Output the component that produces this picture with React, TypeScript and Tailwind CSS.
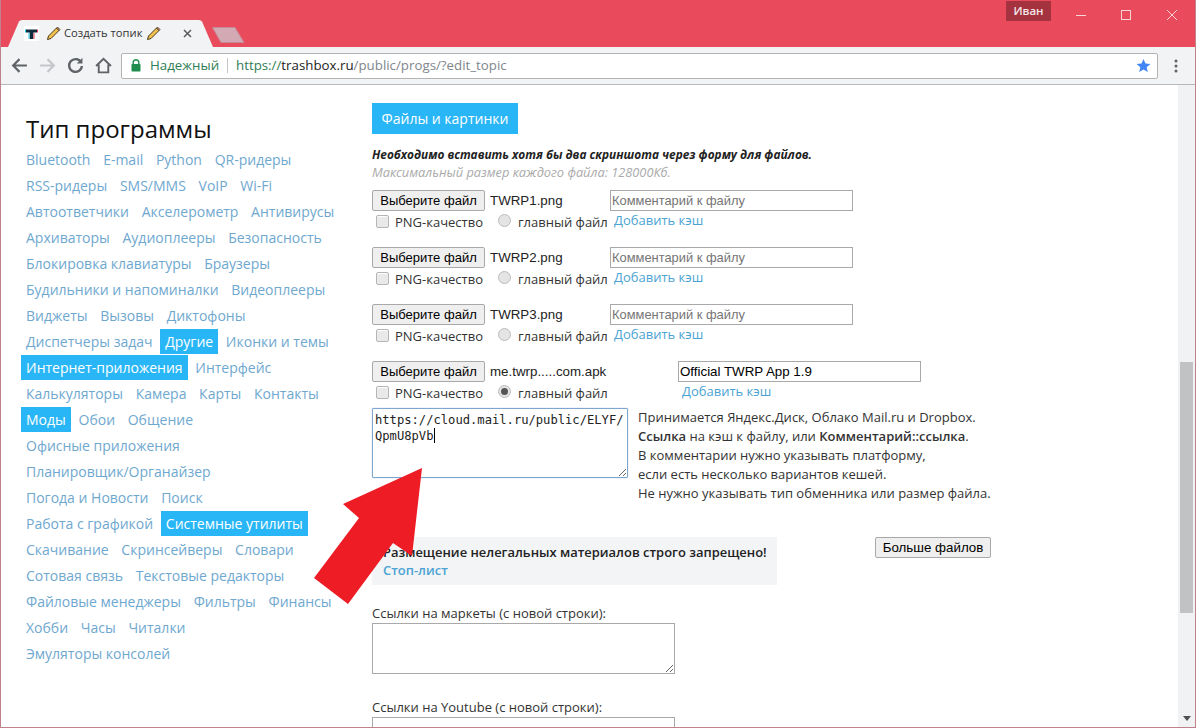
import React from "react";

const rows: [string, boolean?][][] = [
  [["Bluetooth"], ["E-mail"], ["Python"], ["QR-ридеры"]],
  [["RSS-ридеры"], ["SMS/MMS"], ["VoIP"], ["Wi-Fi"]],
  [["Автоответчики"], ["Акселерометр"], ["Антивирусы"]],
  [["Архиваторы"], ["Аудиоплееры"], ["Безопасность"]],
  [["Блокировка клавиатуры"], ["Браузеры"]],
  [["Будильники и напоминалки"], ["Видеоплееры"]],
  [["Виджеты"], ["Вызовы"], ["Диктофоны"]],
  [["Диспетчеры задач"], ["Другие", true], ["Иконки и темы"]],
  [["Интернет-приложения", true], ["Интерфейс"]],
  [["Калькуляторы"], ["Камера"], ["Карты"], ["Контакты"]],
  [["Моды", true], ["Обои"], ["Общение"]],
  [["Офисные приложения"]],
  [["Планировщик/Органайзер"]],
  [["Погода и Новости"], ["Поиск"]],
  [["Работа с графикой"], ["Системные утилиты", true]],
  [["Скачивание"], ["Скринсейверы"], ["Словари"]],
  [["Сотовая связь"], ["Текстовые редакторы"]],
  [["Файловые менеджеры"], ["Фильтры"], ["Финансы"]],
  [["Хобби"], ["Часы"], ["Читалки"]],
  [["Эмуляторы консолей"]],
];

function Pencil() {
  return (
    <svg width="15" height="15" viewBox="0 0 15 15" className="shrink-0">
      <path d="M1.5 13.5 L2.5 10 L10.5 2 L13 4.5 L5 12.5 Z" fill="#f2c14e" stroke="#4a3a1a" strokeWidth="1" strokeLinejoin="round" />
      <path d="M10.5 2 L11.5 1 L14 3.5 L13 4.5 Z" fill="#c98a7a" stroke="#4a3a1a" strokeWidth="0.8" />
    </svg>
  );
}

function Check() {
  return <input type="checkbox" readOnly className="appearance-none w-[13px] h-[13px] rounded-[2px] border border-[#b5b5b5] bg-[#e9e9e9] shadow-[inset_0_1px_1px_#ffffff]" />;
}

function Radio({ on }: { on?: boolean }) {
  return (
    <span className="flex items-center justify-center w-[13px] h-[13px] rounded-full border border-[#bbbbbb] bg-[#e4e4e4]">
      {on && <span className="w-[7px] h-[7px] rounded-full bg-[#555555]" />}
    </span>
  );
}

function FileRow({ name, comment, last }: { name: string; comment?: string; last?: boolean }) {
  return (
    <div className={last ? "h-[47px]" : "h-[57px]"}>
      <div className="flex h-[21px] items-center font-['Liberation_Sans',sans-serif] text-[13.33px] text-[#222222]">
        <button className="w-[113px] h-[21px] border border-[#a9a9a9] rounded-[2px] bg-[#efefef] text-[13px] text-black">Выберите файл</button>
        <span className={`ml-[5px] ${last ? "w-[188px]" : "w-[120px]"}`}>{name}</span>
        <input
          readOnly
          placeholder="Комментарий к файлу"
          defaultValue={comment}
          className="w-[243px] h-[21px] border border-[#a9a9a9] px-[1px] text-[13.33px] text-black placeholder:text-[#757575] placeholder:text-[12.9px] outline-none bg-white"
        />
      </div>
      <div className="flex h-[24px] items-center text-[13px] text-[#333333]">
        <span className="ml-[4px] flex -mt-[1px] -translate-y-[1px]"><Check /></span>
        <span className="ml-[6px] w-[103px]">PNG-качество</span>
        <span className="flex -mt-[5px]"><Radio on={last} /></span>
        <span className="ml-[7px] w-[96px]">главный файл</span>
        {!last && <a className="text-[#4ba3d3] -mt-[4px]">Добавить кэш</a>}
      </div>
    </div>
  );
}

export default function App() {
  return (
    <div className="relative w-[1196px] h-[728px] overflow-hidden flex flex-col bg-white border-x border-b border-[#c0808c] font-['Open_Sans',sans-serif]">
      {/* Title bar */}
      <div className="relative h-[47px] shrink-0 bg-[#e94b5c] flex items-start">
        <div className="relative mt-[20px] ml-[7px] w-[205px] h-[27px] flex items-center">
          <svg className="absolute inset-0" width="205" height="27" viewBox="0 0 205 27">
            <path d="M0 27 L11 1.5 Q12 0 14 0 L191 0 Q193 0 194 1.5 L205 27 Z" fill="#f2f3f5" />
          </svg>
          <div className="relative flex items-center w-full">
            <svg className="ml-[16px]" width="15" height="15" viewBox="0 0 15 15">
              <rect width="15" height="15" fill="#ffffff" />
              <path d="M2 3.5 H13 V6.5 H9.3 V13 H5.7 V6.5 H2 Z" fill="#0f2a38" />
              <path d="M1.5 3.5 V6.5 M5 7 V13" stroke="#25c4e8" strokeWidth="1" />
              <path d="M13.5 3.5 V6.5 M10 7 V13" stroke="#e8405a" strokeWidth="1" />
            </svg>
            <span className="ml-[7px]"><Pencil /></span>
            <span className="ml-[3px] w-[79px] text-[11.2px] text-[#333333] whitespace-nowrap">Создать топик</span>
            <span className="ml-[3px]"><Pencil /></span>
            <svg className="ml-[22px]" width="9" height="9" viewBox="0 0 9 9">
              <path d="M1 1 L8 8 M8 1 L1 8" stroke="#5a5a5a" strokeWidth="1.5" />
            </svg>
          </div>
        </div>
        <svg className="mt-[27px] -ml-[1px]" width="33" height="16" viewBox="0 0 33 16">
          <path d="M0.5 0.5 H23 L32 15.5 H9 Z" fill="#d3aab4" stroke="#c48a96" />
        </svg>
        <div className="absolute left-[1005px] top-[1px] w-[45px] h-[20px] bg-[#a5323f] flex items-center justify-center text-[11.5px] font-semibold text-[#f3e6e8]">Иван</div>
        <svg className="absolute left-[1070px] top-[8px]" width="115" height="14" viewBox="0 0 115 14">
          <path d="M5 7.5 H15" stroke="#f6d5d9" strokeWidth="1" />
          <rect x="50.5" y="2.5" width="9" height="9" fill="none" stroke="#f6d5d9" />
          <path d="M96 2 L106 12 M106 2 L96 12" stroke="#f6d5d9" strokeWidth="1" />
        </svg>
      </div>

      {/* Toolbar */}
      <div className="h-[38px] shrink-0 bg-[#f2f3f5] border-b border-[#b8b8b8] flex items-center">
        <svg className="ml-[10px]" width="17" height="17" viewBox="0 0 16 16">
          <path d="M15 8 H2.5 M8 2 L2 8 L8 14" fill="none" stroke="#5f6368" strokeWidth="2" />
        </svg>
        <svg className="ml-[11px]" width="17" height="17" viewBox="0 0 16 16">
          <path d="M1 8 H13.5 M8 2 L14 8 L8 14" fill="none" stroke="#c4c6c9" strokeWidth="2" />
        </svg>
        <svg className="ml-[11px]" width="17" height="17" viewBox="0 0 16 16">
          <path d="M13.2 5 A6 6 0 1 0 14 8.5" fill="none" stroke="#5f6368" strokeWidth="2.2" />
          <path d="M14.5 0.8 V6.2 H9.2 Z" fill="#5f6368" />
        </svg>
        <svg className="ml-[11px]" width="17" height="17" viewBox="0 0 16 16">
          <path d="M1 8.5 L8 1.7 L15 8.5 M3.5 7 V14.5 H12.5 V7" fill="none" stroke="#5f6368" strokeWidth="1.8" />
        </svg>
        <div className="ml-[9px] w-[1037px] h-[26px] bg-white border border-[#b3b3b3] rounded-[2px] flex items-center">
          <svg className="ml-[9px]" width="10" height="13" viewBox="0 0 10 13">
            <path d="M2.2 5.5 V3.6 A2.8 2.8 0 0 1 7.8 3.6 V5.5" fill="none" stroke="#1e8e4e" strokeWidth="1.4" />
            <rect x="0.5" y="5" width="9" height="7.5" rx="0.8" fill="#1e8e4e" />
          </svg>
          <span className="ml-[9px] text-[13.3px] text-[#2f7d55] w-[69px] whitespace-nowrap">Надежный</span>
          <span className="ml-[8px] w-px h-[15px] bg-[#c4c4c4]" />
          <span className="ml-[8px] text-[13.3px] whitespace-nowrap">
            <span className="text-[#2f7d55]">https://</span>
            <span className="text-[#222222]">trashbox.ru</span>
            <span className="text-[#80868b]">/public/progs/?edit_topic</span>
          </span>
          <svg className="ml-auto mr-[6px]" width="15" height="15" viewBox="0 0 24 24">
            <path d="M12 1.5 L15.2 8.6 L23 9.4 L17.1 14.6 L18.8 22.3 L12 18.3 L5.2 22.3 L6.9 14.6 L1 9.4 L8.8 8.6 Z" fill="#4285f4" />
          </svg>
        </div>
        <svg className="ml-[16px]" width="4" height="14" viewBox="0 0 4 14">
          <circle cx="2" cy="2" r="1.5" fill="#5f6368" />
          <circle cx="2" cy="7" r="1.5" fill="#5f6368" />
          <circle cx="2" cy="12" r="1.5" fill="#5f6368" />
        </svg>
      </div>

      {/* Page */}
      <div className="flex-1 min-h-0 flex overflow-hidden">
        <div className="flex-1 min-w-0 flex">
          <aside className="w-[351px] shrink-0 box-content pl-[20px] pt-[28px]">
            <h2 className="pl-[5px] text-[24px] leading-[32px] text-[#111111] whitespace-nowrap">Тип программы</h2>
            <div className="mt-[1px] text-[14px]">
              {rows.map((row, i) => (
                <div key={i} className="flex h-[26px] items-center gap-[2.7px] whitespace-nowrap">
                  {row.map(([t, on]) => (
                    <span
                      key={t}
                      className={`px-[5px] h-[25px] leading-[25px] ${on ? "bg-[#29b6f6] text-white font-medium" : "text-[#6fa8cf]"}`}
                    >
                      {t}
                    </span>
                  ))}
                </div>
              ))}
            </div>
          </aside>

          <main className="flex-1 min-w-0 pt-[18px]">
            <div className="w-[146px] h-[31px] bg-[#29b6f6] text-white text-[14px] font-medium flex items-center justify-center whitespace-nowrap">Файлы и картинки</div>
            <div className="mt-[11px] leading-[18px] italic whitespace-nowrap">
              <div className="text-[11.85px] font-bold text-[#222222]">Необходимо вставить хотя бы два скриншота через форму для файлов.</div>
              <div className="text-[12.8px] text-[#aaaaaa]">Максимальный размер каждого файла: 128000Кб.</div>
            </div>
            <div className="mt-[9px]">
              <FileRow name="TWRP1.png" />
              <FileRow name="TWRP2.png" />
              <FileRow name="TWRP3.png" />
              <div className="relative">
                <FileRow name="me.twrp.....com.apk" comment="Official TWRP App 1.9" last />
                <a className="absolute left-[310px] top-[21px] text-[13px] leading-[18px] text-[#4ba3d3]">Добавить кэш</a>
              </div>
            </div>

            <div className="flex h-[70px] items-start">
              <div className="relative w-[256px] h-[70px] shrink-0">
                <textarea
                  readOnly
                  defaultValue={"https://cloud.mail.ru/public/ELYF/\nQpmU8pVb"}
                  className="block w-[256px] h-[70px] border border-[#7fa6cc] rounded-[1px] shadow-[0_0_1px_#6a9bd0] pl-[2px] pt-[3px] font-['DejaVu_Sans_Mono',monospace] text-[12.15px] leading-[16px] text-[#222222] outline-none overflow-hidden resize"
                />
                <span className="absolute left-[62px] top-[20px] w-px h-[15px] bg-black" />
              </div>
              <div className="ml-[10px] text-[13px] leading-[19px] text-[#333333] whitespace-nowrap">
                <div>Принимается Яндекс.Диск, Облако Mail.ru и Dropbox.</div>
                <div>
                  <b className="font-semibold">Ссылка</b> на кэш к файлу, или <b className="font-semibold">Комментарий::ссылка</b>.
                </div>
                <div>В комментарии нужно указывать платформу,</div>
                <div>если есть несколько вариантов кешей.</div>
                <div>Не нужно указывать тип обменника или размер файла.</div>
              </div>
            </div>

            <div className="mt-[59px] flex items-start">
              <div className="w-[405px] h-[48px] bg-[#f2f4f6] pl-[11px] pt-[6px] text-[12.95px] leading-[18px] font-semibold whitespace-nowrap">
                <div className="text-[#222222]">Размещение нелегальных материалов строго запрещено!</div>
                <a className="text-[#4ba3d3]">Стоп-лист</a>
              </div>
              <button className="ml-[98px] w-[116px] h-[21px] border border-[#a9a9a9] rounded-[2px] bg-[#efefef] font-['Liberation_Sans',sans-serif] text-[13.33px] text-black">Больше файлов</button>
            </div>

            <div className="mt-[19px] text-[13px] leading-[18px] text-[#333333]">Ссылки на маркеты (с новой строки):</div>
            <textarea readOnly className="block mt-[1px] w-[303px] h-[51px] border border-[#a9a9a9] outline-none resize" />
            <div className="mt-[24px] text-[13px] leading-[18px] text-[#333333]">Ссылки на Youtube (с новой строки):</div>
            <textarea readOnly className="block mt-[1px] w-[303px] h-[51px] border border-[#a9a9a9] outline-none resize" />
          </main>
        </div>

        {/* Scrollbar */}
        <div className="relative w-[17px] shrink-0 bg-[#f1f2f4] flex flex-col items-center">
          <div className="mt-[277px] w-[13px] h-[251px] bg-[#c1c2c3]" />
          <svg className="mt-auto mb-[6px]" width="8" height="5" viewBox="0 0 8 5">
            <path d="M0 0 H8 L4 5 Z" fill="#505050" />
          </svg>
        </div>
      </div>

      {/* Red arrow annotation */}
      <svg className="absolute left-0 top-0 pointer-events-none" width="1196" height="728" viewBox="0 0 1196 728">
        <path d="M421 468 L342 504 L358 518 L313 578 L347 604 L392 543 L411 556 Z" fill="#ee1c25" />
      </svg>
    </div>
  );
}
